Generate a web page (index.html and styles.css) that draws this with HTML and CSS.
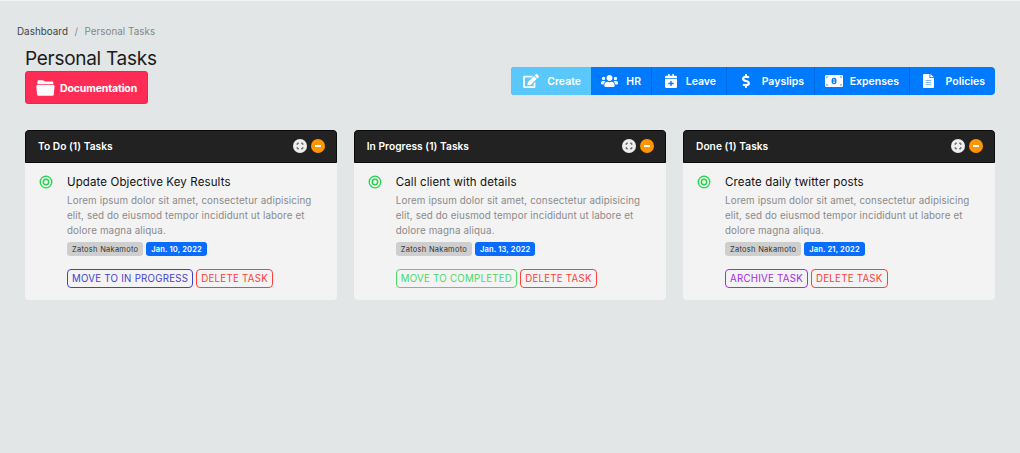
FILE: index.html
```html
<!DOCTYPE html>
<html lang="en">
<head>
<meta charset="utf-8">
<title>Personal Tasks</title>
<link rel="stylesheet" href="styles.css">
</head>
<body>
<svg class="defs" width="0" height="0">
  <symbol id="expand" viewBox="0 0 14 14"><path d="M4.2 6V4.2H6M8 4.2h1.8V6M9.8 8v1.8H8M6 9.8H4.2V8" fill="none" stroke="#555" stroke-width="1"/></symbol>
  <symbol id="target" viewBox="0 0 14 14"><circle cx="7" cy="7" r="5.8" fill="none" stroke="currentColor" stroke-width="1.3"/><circle cx="7" cy="7" r="2.7" fill="none" stroke="currentColor" stroke-width="1.4"/></symbol>
</svg>
<nav class="breadcrumb"><a>Dashboard</a><span class="slash">/</span><span>Personal Tasks</span></nav>
<header class="page-head">
  <div class="heading">
    <h1>Personal Tasks</h1>
    <a class="docs"><svg width="19" height="16" viewBox="0 0 19 16"><path d="M1.5 4.2V1.4Q1.5.2 2.7.2H7L8.7 1.6H16Q17.3 1.6 17.3 2.8V4.2Z" fill="#fff"/><path d="M1.4 5H17.3Q18.6 5 18.5 6.2L17.8 14.4Q17.7 15.7 16.4 15.7H2.4Q1.2 15.7 1.1 14.4L.3 6.2Q.2 5 1.4 5Z" fill="#fff"/></svg><span>Documentation</span></a>
  </div>
  <nav class="actions">
    <a class="action create"><svg width="16" height="14" viewBox="0 0 576 512"><path fill="#fff" d="M402.6 83.200l90.200 90.200c3.800 3.800 3.800 10 0 13.800L274.400 405.600l-92.800 10.300c-12.400 1.400-22.900-9.100-21.500-21.500l10.300-92.800L388.800 83.200c3.800-3.800 10-3.800 13.800 0zm162-22.900l-48.800-48.800c-15.200-15.200-39.900-15.200-55.200 0l-35.400 35.400c-3.800 3.800-3.800 10 0 13.800l90.200 90.200c3.800 3.800 10 3.800 13.800 0l35.400-35.400c15.200-15.300 15.200-40 0-55.200zM384 346.200V448H64V128h229.800c3.200 0 6.200-1.300 8.500-3.500l40-40c7.600-7.600 2.200-20.500-8.500-20.500H48C21.500 64 0 85.500 0 112v352c0 26.500 21.500 48 48 48h352c26.500 0 48-21.500 48-48V306.200c0-10.700-12.900-16-20.500-8.500l-40 40c-2.200 2.300-3.500 5.300-3.500 8.500z"/></svg><span>Create</span></a>
    <a class="action hr"><svg width="17" height="14" viewBox="0 0 640 512"><path fill="#fff" d="M96 224c35.300 0 64-28.700 64-64s-28.700-64-64-64-64 28.700-64 64 28.700 64 64 64zm448 0c35.300 0 64-28.700 64-64s-28.700-64-64-64-64 28.700-64 64 28.700 64 64 64zm32 32h-64c-17.600 0-33.500 7.100-45.100 18.600 40.300 22.100 68.900 62 75.100 109.400h66c17.700 0 32-14.300 32-32v-32c0-35.300-28.700-64-64-64zm-256 0c61.900 0 112-50.100 112-112S381.900 32 320 32 208 82.100 208 144s50.100 112 112 112zm76.800 32h-8.300c-20.800 10-43.900 16-68.500 16s-47.600-6-68.500-16h-8.300C179.600 288 128 339.600 128 403.200V432c0 26.500 21.500 48 48 48h288c26.500 0 48-21.500 48-48v-28.800c0-63.600-51.600-115.200-115.200-115.200zm-223.700-13.400C161.500 263.100 145.600 256 128 256H64c-35.300 0-64 28.700-64 64v32c0 17.700 14.300 32 32 32h65.900c6.300-47.400 34.900-87.300 75.200-109.400z"/></svg><span>HR</span></a>
    <a class="action leave"><svg width="12" height="14" viewBox="0 0 12 14"><path fill="#fff" d="M3.100 0V1.700H1.300Q0 1.700 0 3V4.200H12V3Q12 1.700 10.700 1.700H8.900V0H7.300V1.700H4.700V0Z"/><path fill="#fff" fill-rule="evenodd" d="M0 5H12V12.700Q12 14 10.700 14H1.300Q0 14 0 12.700ZM5.300 6.900V8.800H3.400V10.200H5.300V12.100H6.700V10.200H8.600V8.800H6.700V6.900Z"/></svg><span>Leave</span></a>
    <a class="action pay"><svg width="8" height="14" viewBox="0 0 288 512"><path fill="#fff" d="M209.200 233.400l-108-31.600C88.700 198.200 80 186.500 80 173.500c0-16.300 13.200-29.500 29.500-29.500h66.300c12.200 0 24.200 3.700 34.200 10.500 6.100 4.100 14.300 3.100 19.500-2l34.800-34c7.100-6.900 6.100-18.400-1.800-24.500C238 74.800 207.400 64.100 176 64V16c0-8.800-7.200-16-16-16h-32c-8.800 0-16 7.200-16 16v48h-2.500C45.800 64-5.400 118.700.5 183.600c4.200 46.100 39.400 83.600 83.800 96.600l102.500 30c12.500 3.700 21.200 15.300 21.200 28.300 0 16.300-13.200 29.500-29.500 29.500h-66.300C100 368 88 364.300 78 357.500c-6.100-4.100-14.300-3.100-19.500 2l-34.800 34c-7.100 6.900-6.100 18.400 1.800 24.500 24.500 19.200 55.100 29.900 86.500 30v48c0 8.800 7.200 16 16 16h32c8.800 0 16-7.200 16-16v-48.200c46.600-.9 90.300-28.600 105.700-72.700 21.500-61.600-14.600-124.800-72.500-141.700z"/></svg><span>Payslips</span></a>
    <a class="action expenses"><svg width="18" height="12" viewBox="0 0 18 12"><rect width="18" height="12" rx="1.2" fill="#fff"/><path d="M1.400 2.900Q2.800 2.800 2.900 1.500H1.400ZM16.600 2.900Q15.200 2.800 15.100 1.500H16.600ZM1.400 9.100Q2.800 9.200 2.900 10.500H1.400ZM16.600 9.100Q15.200 9.200 15.100 10.500H16.600Z" fill="#007aff"/><ellipse cx="9" cy="6" rx="2.500" ry="3.300" fill="#007aff"/><path d="M8.300 4.700L9.100 4.200V7.400M8.100 7.600H10" fill="none" stroke="#fff" stroke-width=".8"/></svg><span>Expenses</span></a>
    <a class="action policies"><svg width="11" height="14" viewBox="0 0 11 14"><path fill="#fff" d="M1 0H6.500V4H11V13Q11 14 10 14H1Q0 14 0 13V1Q0 0 1 0ZM7.400 0L11 3.300H7.400Z"/><path d="M2.600 6.500H8.200M2.600 8.600H8.200M2.600 10.700H8.200" stroke="#6eafff" stroke-width=".9"/></svg><span>Policies</span></a>
  </nav>
</header>
<main class="board">
  <section class="card">
    <div class="card-head"><h2>To Do (1) Tasks</h2><svg class="round" viewBox="0 0 14 14"><use href="#expand"/></svg><i class="round minus"></i></div>
    <article class="task"><svg class="target"><use href="#target"/></svg>
      <div><h3>Update Objective Key Results</h3>
      <p>Lorem ipsum dolor sit amet, consectetur adipisicing<br>elit, sed do eiusmod tempor incididunt ut labore et<br>dolore magna aliqua.</p>
      <div class="badges"><span class="badge">Zatosh Nakamoto</span><span class="badge date">Jan. 10, 2022</span></div>
      <div class="buttons"><a class="btn progress">MOVE TO IN PROGRESS</a><a class="btn delete">DELETE TASK</a></div></div>
    </article>
  </section>
  <section class="card">
    <div class="card-head"><h2>In Progress (1) Tasks</h2><svg class="round" viewBox="0 0 14 14"><use href="#expand"/></svg><i class="round minus"></i></div>
    <article class="task"><svg class="target"><use href="#target"/></svg>
      <div><h3>Call client with details</h3>
      <p>Lorem ipsum dolor sit amet, consectetur adipisicing<br>elit, sed do eiusmod tempor incididunt ut labore et<br>dolore magna aliqua.</p>
      <div class="badges"><span class="badge">Zatosh Nakamoto</span><span class="badge date">Jan. 13, 2022</span></div>
      <div class="buttons"><a class="btn complete">MOVE TO COMPLETED</a><a class="btn delete">DELETE TASK</a></div></div>
    </article>
  </section>
  <section class="card">
    <div class="card-head"><h2>Done (1) Tasks</h2><svg class="round" viewBox="0 0 14 14"><use href="#expand"/></svg><i class="round minus"></i></div>
    <article class="task"><svg class="target"><use href="#target"/></svg>
      <div><h3>Create daily twitter posts</h3>
      <p>Lorem ipsum dolor sit amet, consectetur adipisicing<br>elit, sed do eiusmod tempor incididunt ut labore et<br>dolore magna aliqua.</p>
      <div class="badges"><span class="badge">Zatosh Nakamoto</span><span class="badge date">Jan. 21, 2022</span></div>
      <div class="buttons"><a class="btn archive">ARCHIVE TASK</a><a class="btn delete">DELETE TASK</a></div></div>
    </article>
  </section>
</main>
</body>
</html>
```
FILE: styles.css
```css
* { box-sizing: border-box; }
body { margin: 0; height: 453px; overflow: hidden; border-top: 1px solid #f3f5f5; background: #e2e6e7; font-family: Inter, sans-serif; color: #111; white-space: nowrap; }
h1, h2, h3, p { margin: 0; font-weight: 400; }
svg { display: block; flex: none; }
.defs { position: absolute; }
.breadcrumb { display: flex; padding: 23px 0 0 17px; font-size: 9.800px; line-height: 15px; letter-spacing: .05px; color: #858789; }
.breadcrumb a { color: #414345; }
.slash { margin: 0 6.500px; }
.page-head { display: flex; justify-content: space-between; align-items: flex-start; height: 91px; padding: 7px 25px 0; }
.heading { padding-top: 1px; }
h1 { font-size: 19px; line-height: 24px; letter-spacing: -.28px; color: #1b1b1c; }
.docs { display: flex; align-items: center; gap: 5px; width: 123px; height: 33px; padding-left: 10px; border: 1px solid #fa2049; border-radius: 3px; background: #ff2d55; color: #fff; font-size: 10.500px; font-weight: 700; letter-spacing: -.13px; }
.docs span { padding-top: 1px; }
.actions { display: flex; height: 28px; margin-top: 21px; border-radius: 4px; overflow: hidden; background: #007aff; color: #fff; font-size: 10.500px; font-weight: 600; line-height: 28px; }
.action { display: flex; align-items: center; justify-content: space-between; border-right: 1px solid #006be0; padding: 0 10px; }
.action span { padding-top: 1px; }
.create { width: 80px; padding-left: 12px; background: #5ac8fa; border-right: 0; }
.hr { width: 61px; }
.leave { width: 75px; padding-left: 13px; }
.pay { width: 88px; padding-left: 15px; }
.expenses { width: 95px; }
.policies { width: 85px; padding-left: 13px; border-right: 0; }
.board { display: grid; grid-template-columns: 312px 312.500px 312px; column-gap: 16.750px; padding: 0 25px; }
.card { height: 170px; border-radius: 4px; overflow: hidden; background: #f3f3f3; }
.card-head { display: flex; align-items: center; height: 33px; padding: 0 11px 1px 12px; background: #222; border: 1px solid #0b0b0b; border-radius: 3px 3px 0 0; color: #fff; }
h2 { flex: 1; font-size: 10.200px; font-weight: 600; letter-spacing: .03px; }
.round { width: 14px; height: 14px; border-radius: 50%; background: #eee; }
.minus { display: flex; align-items: center; justify-content: center; margin-left: 4px; background: #ff9500; }
.minus::before { content: ""; width: 6px; height: 2px; background: #fff; }
.task { display: flex; padding: 12px 0 0 14px; }
.target { width: 14px; height: 14px; margin: 0 14px 0 0; color: #20d549; }
h3 { font-size: 11.500px; line-height: 14px; letter-spacing: .12px; }
p { margin-top: 4px; font-size: 9.800px; line-height: 15px; letter-spacing: .11px; color: #8a8a8c; }
.badges { display: flex; gap: 3px; margin-top: 4px; }
.badge { height: 14px; padding: 1px 5px 0; border-radius: 3px; background: #cecece; color: #333; font-size: 7.500px; line-height: 14px; letter-spacing: .26px; }
.date { background: #0a6cff; color: #fff; font-weight: 600; letter-spacing: .16px; }
.buttons { display: flex; gap: 3px; margin-top: 13px; }
.btn { height: 19px; padding: 0 4px; border: 1px solid currentColor; border-radius: 4px; font-size: 9.700px; line-height: 17px; letter-spacing: .26px; }
.progress { color: #4541d0; }
.complete { color: #4cd964; }
.archive { color: #a62be8; }
.delete { color: #ff4038; }
```
